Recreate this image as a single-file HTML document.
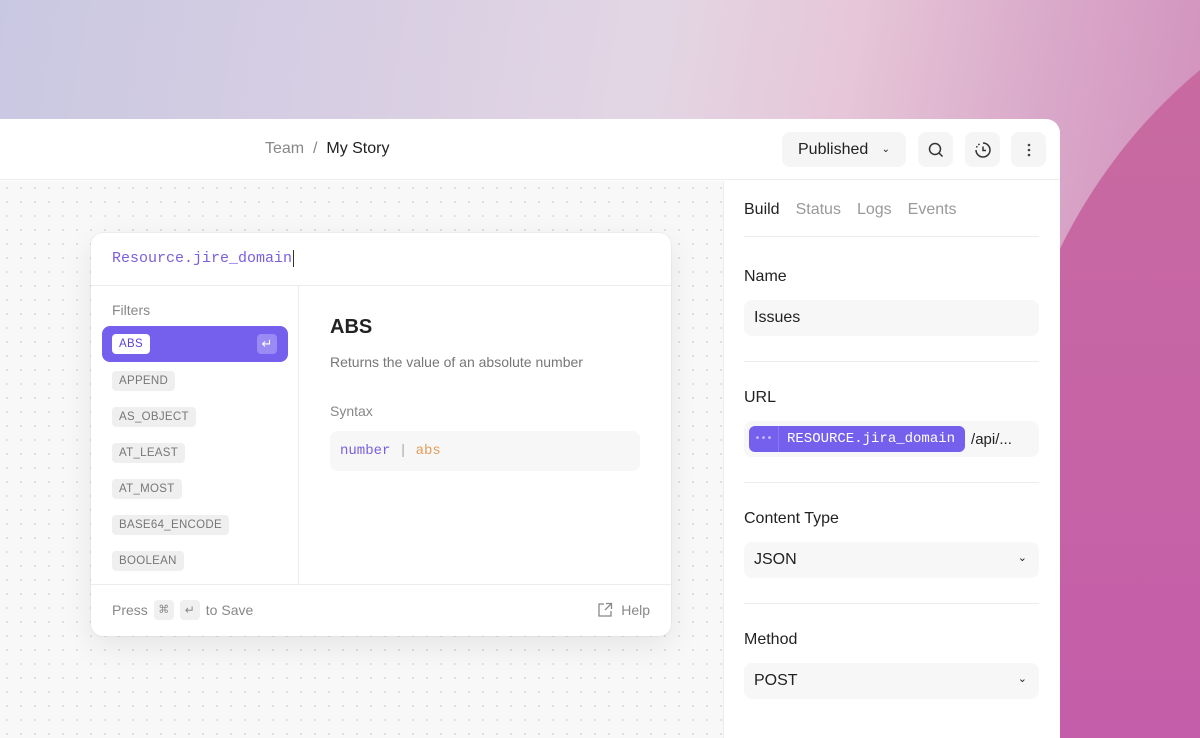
<!DOCTYPE html>
<html style="width:1200px;height:738px;overflow:hidden"><head><meta charset="utf-8"><style>
*{box-sizing:border-box;margin:0;padding:0}
body{width:1200px;height:738px;overflow:hidden;position:relative;font-family:"Liberation Sans",sans-serif;
background:linear-gradient(100deg,#c9c8e2 0%,#d9cfe3 30%,#e3d6e4 50%,#e6c6d8 65%,#d9a8c9 80%,#cf86b6 100%)}
.bgwrap{position:absolute;left:0;top:0;width:1200px;height:738px;overflow:hidden}
.bgshape{position:absolute;left:1000px;top:-40px;width:1000px;height:1100px;border-radius:50%;background:linear-gradient(180deg,#c96d9f,#c257ae)}
.app{position:absolute;left:0;top:119px;width:1060px;height:619px;background:#fff;border-top-right-radius:14px;overflow:hidden}
.top{height:61px;border-bottom:1px solid #ececec;position:relative}
.crumb{position:absolute;left:265px;top:21px;font-size:16px;color:#888}
.crumb b{font-weight:normal;color:#222}
.btn{position:absolute;top:13px;height:35px;background:#f5f5f5;border-radius:8px;display:flex;align-items:center;justify-content:center}
.canvas{position:absolute;left:0;top:62px;width:724px;height:557px;background-color:#f8f8f8;
background-image:radial-gradient(#dedede 1px,transparent 1.2px);background-size:14px 14px;border-right:1px solid #ececec}
.side{position:absolute;left:744px;top:62px;width:295px}
.tabs{display:flex;gap:16px;font-size:16px;color:#999;padding-top:20px;height:56px;border-bottom:1px solid #ececec}
.tabs span:first-child{color:#222}
.lbl{font-size:16px;color:#222;margin-top:27px;height:17px;line-height:17px}
.inp{margin-top:15px;height:36px;background:#f7f7f7;border-radius:8px;font-size:16px;color:#222;padding:0 0 0 10px;position:relative;display:flex;align-items:center}
.sep{border-bottom:1px solid #ececec;height:26px}
.chev{position:absolute;right:12px;top:9px;font-size:11px}
.card{position:absolute;left:91px;top:233px;width:580px;height:403px;background:#fff;border-radius:12px;box-shadow:0 10px 30px rgba(0,0,0,.08),0 0 0 1px rgba(0,0,0,.03)}
.mono{font-family:"Liberation Mono",monospace}
.tag{display:inline-block;font-size:11.5px;line-height:13px;color:#777;background:#efefef;border-radius:4px;padding:4px 7px 3px;letter-spacing:.3px}
.list .tag{display:table;margin-bottom:16px}
</style></head><body>
<div class="bgwrap"><div class="bgshape"></div></div>
<div class="app">
 <div class="top">
  <div class="crumb">Team &nbsp;/&nbsp; <b>My Story</b></div>
  <div class="btn" style="left:782px;width:124px;font-size:16px;color:#222">Published&nbsp;&nbsp;&nbsp;<span style="font-size:10px">&#8964;</span></div>
  <div class="btn" style="left:918px;width:35px"><svg width="18" height="18" viewBox="0 0 18 18" fill="none" stroke="#333" stroke-width="1.5"><circle cx="8" cy="8" r="5.5"/><path d="M12 12l3.5 3.5"/></svg></div>
  <div class="btn" style="left:965px;width:35px"><svg width="20" height="20" viewBox="0 0 20 20" fill="none" stroke="#333" stroke-width="1.5"><path d="M10 3a7 7 0 1 1-7 7" /><path d="M10 6.5V10.5h3"/><path d="M3.5 7.5l.6-1.3M5.3 4.9l1.2-.9" /></svg></div>
  <div class="btn" style="left:1011px;width:35px"><svg width="4" height="16"><circle cx="2" cy="3" r="1.3" fill="#444"/><circle cx="2" cy="8" r="1.3" fill="#444"/><circle cx="2" cy="13" r="1.3" fill="#444"/></svg></div>
 </div>
 <div class="canvas"></div>
 <div class="side">
  <div class="tabs"><span>Build</span><span>Status</span><span>Logs</span><span>Events</span></div>
  <div class="lbl" style="margin-top:31px">Name</div><div class="inp">Issues</div><div class="sep"></div>
  <div class="lbl">URL</div>
  <div class="inp" style="padding-left:5px"><span style="display:inline-flex;height:26px;background:#7560ee;border-radius:6px;color:#fff;align-items:center;font-size:14px" class="mono"><span style="width:30px;border-right:1px solid #8a78f2;height:26px;display:flex;align-items:center;justify-content:center;color:#c8bffa;font-size:10px">•••</span><span style="padding:0 10px 0 8px">RESOURCE.jira_domain</span></span><span style="font-size:15px;margin-left:6px">/api/...</span></div>
  <div class="sep"></div>
  <div class="lbl">Content Type</div><div class="inp">JSON<span class="chev">&#8964;</span></div><div class="sep"></div>
  <div class="lbl">Method</div><div class="inp">POST<span class="chev">&#8964;</span></div>
 </div>
</div>
<div class="card">
 <div style="height:53px;border-bottom:1px solid #ececec;padding:17px 0 0 21px;font-size:15px;color:#7a5fe0" class="mono">Resource.jire_domain<span style="border-left:1.5px solid #333;margin-left:1px"></span></div>
 <div style="position:absolute;left:207px;top:53px;width:1px;height:298px;background:#ececec"></div>
 <div style="position:absolute;left:21px;top:69px;font-size:14px;color:#888">Filters</div>
 <div style="position:absolute;left:11px;top:93px;width:186px;height:36px;background:#7560ee;border-radius:8px">
  <span class="tag" style="position:absolute;left:10px;top:8px;background:#fff;color:#5a45d8">ABS</span>
  <span style="position:absolute;right:11px;top:8px;width:20px;height:20px;background:#9a8af3;border-radius:4px;color:#fff;font-size:13px;text-align:center;line-height:20px">&#8629;</span>
 </div>
 <div class="list" style="position:absolute;left:21px;top:138px">
  <span class="tag">APPEND</span><span class="tag">AS_OBJECT</span><span class="tag">AT_LEAST</span><span class="tag">AT_MOST</span><span class="tag">BASE64_ENCODE</span><span class="tag">BOOLEAN</span>
 </div>
 <div style="position:absolute;left:239px;top:83px;font-size:20px;font-weight:bold;color:#222">ABS</div>
 <div style="position:absolute;left:239px;top:121px;font-size:14px;color:#777">Returns the value of an absolute number</div>
 <div style="position:absolute;left:239px;top:170px;font-size:14px;color:#888">Syntax</div>
 <div class="mono" style="position:absolute;left:239px;top:198px;width:310px;height:40px;background:#f7f7f7;border-radius:8px;padding:12px 0 0 10px;font-size:14px;color:#7a5fe0">number <span style="color:#aaa">|</span> <span style="color:#e69a5a">abs</span></div>
 <div style="position:absolute;left:0;top:351px;width:580px;border-top:1px solid #ececec"></div>
 <div style="position:absolute;left:21px;top:367px;font-size:14px;color:#888;display:flex;align-items:center;gap:6px">Press <span style="display:inline-block;width:20px;height:20px;background:#f0f0f0;border-radius:4px;text-align:center;font-size:11px;line-height:20px">&#8984;</span><span style="display:inline-block;width:20px;height:20px;background:#f0f0f0;border-radius:4px;text-align:center;font-size:12px;line-height:20px">&#8629;</span> to Save</div>
 <div style="position:absolute;right:21px;top:369px;font-size:14px;color:#888;display:flex;align-items:center;gap:8px"><svg width="16" height="16" viewBox="0 0 16 16" fill="none" stroke="#888" stroke-width="1.3"><path d="M7 2H2v12h12V9"/><path d="M9 1.5h5.5V7M14.5 1.5L8 8"/></svg>Help</div>
</div>
</body></html>
